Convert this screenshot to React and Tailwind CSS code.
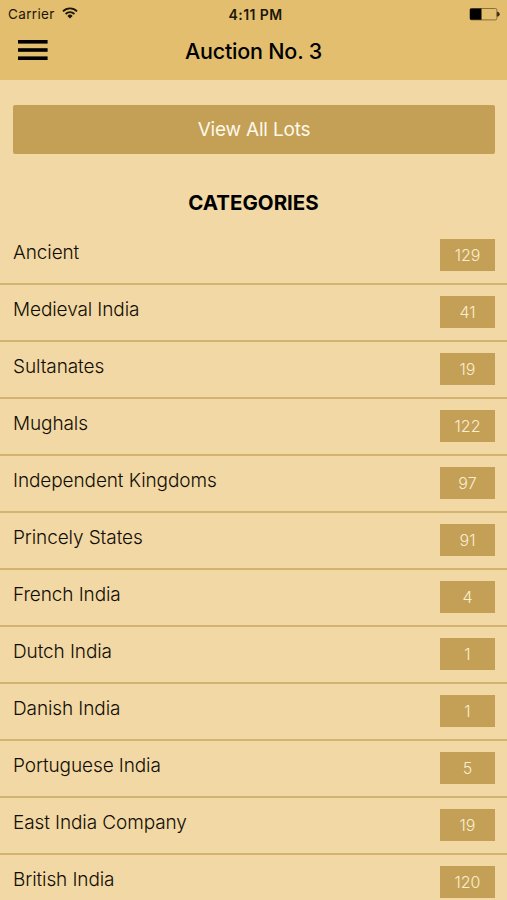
import React from 'react';

const categories = [
  { name: 'Ancient', lots: 129 },
  { name: 'Medieval India', lots: 41 },
  { name: 'Sultanates', lots: 19 },
  { name: 'Mughals', lots: 122 },
  { name: 'Independent Kingdoms', lots: 97 },
  { name: 'Princely States', lots: 91 },
  { name: 'French India', lots: 4 },
  { name: 'Dutch India', lots: 1 },
  { name: 'Danish India', lots: 1 },
  { name: 'Portuguese India', lots: 5 },
  { name: 'East India Company', lots: 19 },
  { name: 'British India', lots: 120 },
];

const WifiIcon = () => (
  <svg width="16" height="12" viewBox="0 0 16 12" fill="none" stroke="#1c1608" strokeWidth="1.8" className="mb-[2px]">
    <path d="M1 4.3a10 10 0 0 1 14 0" />
    <path d="M3.6 7a6.3 6.3 0 0 1 8.8 0" />
    <path d="M8 11.6 5.4 8.9a3.7 3.7 0 0 1 5.2 0z" fill="#1c1608" stroke="none" />
  </svg>
);

const BatteryIcon = () => (
  <svg width="31" height="13" viewBox="0 0 31 13">
    <rect x="0.9" y="0.5" width="27" height="11.4" rx="1.6" fill="none" stroke="#8a713a" />
    <path d="M2 0.6h10.5v11.2H2a1 1 0 0 1-1-1V1.6a1 1 0 0 1 1-1z" fill="#000" />
    <path d="M28.3 4.2a2 2 0 0 1 0 4z" fill="#3a2a0c" stroke="#3a2a0c" strokeWidth="0.8" />
  </svg>
);

const MenuIcon = () => (
  <svg width="30" height="22" viewBox="0 0 30 22" fill="#000">
    <rect x="0" y="1" width="29.6" height="3.6" />
    <rect x="0" y="9.2" width="29.6" height="3.6" />
    <rect x="0" y="17.4" width="29.6" height="3.6" />
  </svg>
);

const StatusBar = () => (
  <div className="grid h-7 grid-cols-3 items-center pr-[7px] pl-[8px] text-[13.5px] text-[#1c1608]">
    <div className="flex items-center gap-[7px]">
      <span className="tracking-[0.35px]">Carrier</span>
      <WifiIcon />
    </div>
    <span className="pl-[3px] text-center text-[14px] font-semibold tracking-[0.4px]">4:11 PM</span>
    <div className="flex justify-end">
      <BatteryIcon />
    </div>
  </div>
);

const App = () => {
  return (
    <div className="h-[900px] w-full overflow-hidden bg-[#f1d8a5] font-['Inter','Liberation_Sans',sans-serif] text-black">
      <header className="h-20 bg-[#e2be6e]">
        <StatusBar />
        <div className="grid h-[46px] grid-cols-[60px_1fr_60px] items-center">
          <button className="mb-[2px] ml-[18px] w-[30px]" aria-label="Menu">
            <MenuIcon />
          </button>
          <h1 className="text-center text-[21.5px] font-medium tracking-[-0.2px]">Auction No. 3</h1>
        </div>
      </header>

      <main>
        <div className="pt-[25px] pr-3 pl-[13px]">
          <button className="h-[49px] w-full rounded-[2px] bg-[#c3a056] pt-px text-[19px] tracking-[-0.2px] text-[#fff8e8]">
            View All Lots
          </button>
        </div>

        <h2 className="mt-[34px] h-10 text-center text-[20.5px] leading-[29px] font-bold">CATEGORIES</h2>

        {/* Category rows with lot counts */}
        <ul>
          {categories.map((category) => (
            <li
              key={category.name}
              className="flex h-[57px] items-start justify-between border-b-2 border-[#d3b370] pr-3 pl-[13px]"
            >
              <span className="pt-[11px] text-[19px] leading-7 font-light tracking-[-0.1px] text-[#120d04]">
                {category.name}
              </span>
              <span className="mt-[11px] flex h-8 w-[55px] items-center justify-center bg-[#c3a056] text-[16px] font-light text-[#fbedcf]">
                {category.lots}
              </span>
            </li>
          ))}
        </ul>
      </main>
    </div>
  );
};

export default App;
